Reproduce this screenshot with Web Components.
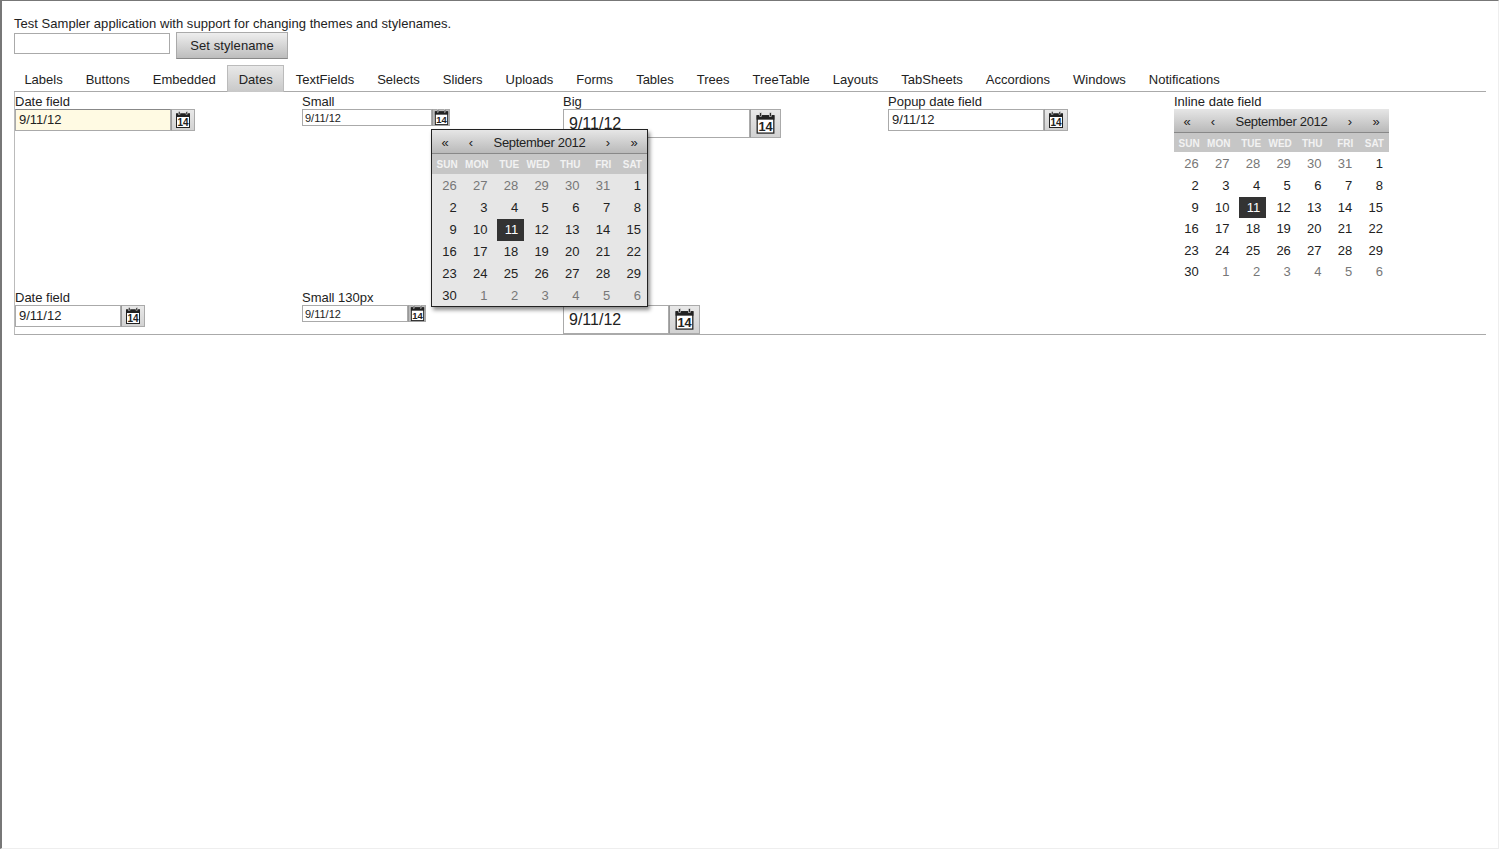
<!DOCTYPE html>
<html lang="en">
<head>
<meta charset="utf-8">
<title>Test Sampler</title>
<style>
html, body { margin: 0; height: 100%; background: #fff; }
body { font: 13px/16px "Liberation Sans", Arial, sans-serif; color: #222; overflow: hidden; }
</style>
</head>
<body>
<sampler-app>
	<tab-bar></tab-bar>
	<dates-panel>
		<labeled-field label="Date field"><date-field focused style="--input-w:156px"></date-field></labeled-field>
		<labeled-field label="Small"><date-field kind="small" style="--input-w:130px"></date-field></labeled-field>
		<labeled-field label="Big"><date-field kind="big" style="--input-w:187px"></date-field></labeled-field>
		<labeled-field label="Popup date field"><date-field style="--input-w:156px"></date-field></labeled-field>
		<labeled-field label="Inline date field"><month-calendar kind="inline"></month-calendar></labeled-field>
		<labeled-field label="Date field"><date-field style="--input-w:106px"></date-field></labeled-field>
		<labeled-field label="Small 130px"><date-field kind="small" style="--input-w:106px"></date-field></labeled-field>
		<labeled-field label="&nbsp;"><date-field kind="big" style="--input-w:106px"></date-field></labeled-field>
		<month-calendar slot="popup" kind="popup"></month-calendar>
	</dates-panel>
</sampler-app>

<script>
const appTemplate = document.createElement("template");
appTemplate.innerHTML = `
<style>
:host {
	display: block;
	box-sizing: border-box;
	height: 849px;
	width: 1499px;
	padding: 15px 12px 0 12px;
	border-top: 1px solid #777;
	border-left: 2px solid #777;
	border-right: 1px solid #eee;
	border-bottom: 1px solid #eee;
}
p {
	margin: 0;
	height: 16px;
	line-height: 16px;
	letter-spacing: 0.03px;
}
form {
	display: flex;
	align-items: flex-start;
	gap: 6px;
	margin-bottom: 6px;
}
input {
	box-sizing: border-box;
	width: 156px;
	height: 21px;
	margin-top: 1px;
	border: 1px solid #aaa;
	outline: none;
}
button {
	box-sizing: border-box;
	width: 112px;
	height: 27px;
	padding: 0;
	border: 1px solid #aaa;
	border-bottom-color: #888;
	background: linear-gradient(#eee, #bdbdbd);
	font: inherit;
	color: #222;
	letter-spacing: 0.1px;
}
</style>
<p>Test Sampler application with support for changing themes and stylenames.</p>
<form onsubmit="return false">
	<input aria-label="Stylename">
	<button type="button">Set stylename</button>
</form>
<slot></slot>
`;

class SamplerApp extends HTMLElement {
	constructor() {
		super().attachShadow({ mode: "open" }).appendChild(appTemplate.content.cloneNode(true));
	}
}
customElements.define("sampler-app", SamplerApp);

const TABS = ["Labels", "Buttons", "Embedded", "Dates", "TextFields", "Selects", "Sliders", "Uploads",
	"Forms", "Tables", "Trees", "TreeTable", "Layouts", "TabSheets", "Accordions", "Windows", "Notifications"];

class TabBar extends HTMLElement {
	constructor() {
		super().attachShadow({ mode: "open" }).innerHTML = `
<style>
:host {
	display: flex;
	height: 27px;
	box-sizing: border-box;
	border-bottom: 1px solid #aaa;
}
div {
	box-sizing: border-box;
	height: 27px;
	padding: 6px 10.5px 0;
	line-height: 16px;
	border: 1px solid transparent;
	border-bottom: 0;
	white-space: nowrap;
}
div:first-of-type { padding-left: 9.4px; }
div.on {
	border-color: #bbb;
	background: linear-gradient(#e8e8e8, #c8c8c8);
}
</style>
${TABS.map((t) => `<div class="${t == "Dates" ? "on" : ""}">${t}</div>`).join("")}`;
	}
}
customElements.define("tab-bar", TabBar);

class DatesPanel extends HTMLElement {
	constructor() {
		super().attachShadow({ mode: "open" }).innerHTML = `
<style>
:host {
	display: grid;
	position: relative;
	box-sizing: border-box;
	height: 243px;
	grid-template-columns: 287px 261px 325px 286px 1fr;
	grid-template-rows: 196px 1fr;
	padding: 2px 0 0 0;
	border-left: 1px solid #bbb;
	border-bottom: 1px solid #aaa;
}
::slotted([slot="popup"]) {
	position: absolute;
	left: 416px;
	top: 37px;
}
</style>
<slot></slot>
<slot name="popup"></slot>`;
	}
}
customElements.define("dates-panel", DatesPanel);

class LabeledField extends HTMLElement {
	constructor() {
		super().attachShadow({ mode: "open" }).innerHTML = `
<style>
:host { display: block; }
label { display: block; height: 15px; line-height: 16px; white-space: nowrap; }
</style>
<label></label>
<slot></slot>`;
		this.shadowRoot.querySelector("label").innerHTML = this.getAttribute("label");
	}
}
customElements.define("labeled-field", LabeledField);

const FIELD_SIZES = {
	normal: { h: 22, font: 13, btn: 24, icon: 18, pad: 3, top: 0 },
	small: { h: 17, font: 11, btn: 18, icon: 17, pad: 2, top: 1 },
	big: { h: 29, font: 16, btn: 31, icon: 23, pad: 5, top: 0 },
};

class DateField extends HTMLElement {
	constructor() {
		super();
		const size = FIELD_SIZES[this.getAttribute("kind") || "normal"];
		const focused = this.hasAttribute("focused");
		this.attachShadow({ mode: "open" }).innerHTML = `
<style>
:host {
	display: flex;
	height: ${size.h}px;
	font-size: ${size.font}px;
}
.value {
	box-sizing: border-box;
	width: var(--input-w);
	padding: ${size.top}px 0 0 ${size.pad}px;
	line-height: ${size.h - 2}px;
	border: 1px solid #aaa;
	border-top-color: ${focused ? "#888" : "#aaa"};
	background: ${focused ? "#fffae3" : "#fff"};
	color: #222;
}
.btn {
	box-sizing: border-box;
	display: flex;
	align-items: center;
	justify-content: center;
	width: ${size.btn}px;
	border: 1px solid #aaa;
	border-left-color: #999;
	background: ${this.getAttribute("kind") == "small" ? "#bbb" : "linear-gradient(#e8e8e8, #d2d2d2)"};
}
svg { display: block; flex: none; width: ${size.icon}px; height: ${size.icon}px; }
</style>
<div class="value">9/11/12</div>
<div class="btn">
	<svg viewBox="0 0 18 18" aria-hidden="true">
		<rect x="2.5" y="3" width="13" height="13.5" fill="#fff" stroke="#222"/>
		<rect x="2" y="2.5" width="14" height="3.5" fill="#222"/>
		<rect x="4.5" y="0.5" width="1.5" height="3" fill="#222" stroke="#ddd" stroke-width="0.5"/>
		<rect x="12" y="0.5" width="1.5" height="3" fill="#222" stroke="#ddd" stroke-width="0.5"/>
		<text x="9" y="15" text-anchor="middle" font-family="Liberation Sans" font-weight="700" font-size="10" fill="#222">14</text>
	</svg>
</div>`;
	}
}
customElements.define("date-field", DateField);

const SEPTEMBER_CELLS = [26, 27, 28, 29, 30, 31, 1, 2, 3, 4, 5, 6, 7, 8, 9, 10, 11, 12, 13, 14, 15,
	16, 17, 18, 19, 20, 21, 22, 23, 24, 25, 26, 27, 28, 29, 30, 1, 2, 3, 4, 5, 6];

class MonthCalendar extends HTMLElement {
	constructor() {
		super();
		const popup = this.getAttribute("kind") == "popup";
		const days = SEPTEMBER_CELLS.map((d, i) => {
			const other = i < 6 || i > 35;
			const today = i == 16;
			return `<span class="${other ? "other" : ""} ${today ? "today" : ""}">${d}</span>`;
		}).join("");
		this.attachShadow({ mode: "open" }).innerHTML = `
<style>
:host {
	display: block;
	box-sizing: border-box;
	width: ${popup ? "217px" : "215px"};
	${popup ? `
	height: 178px;
	border: 1px solid #222;
	background: #e6e6e6;
	box-shadow: 2px 3px 4px rgba(0, 0, 0, 0.45);
	` : ""}
}
header {
	display: grid;
	grid-template-columns: 26px 26px 1fr 26px 26px;
	height: 24px;
	line-height: 26px;
	text-align: center;
	border-bottom: 1px solid #888;
	background: linear-gradient(#e6e6e6, #b9b9b9);
	box-sizing: border-box;
}
header .title { letter-spacing: -0.3px; }
.week, .days {
	display: grid;
	grid-template-columns: repeat(7, 1fr);
	text-align: right;
}
.week {
	height: ${popup ? "20px" : "19px"};
	line-height: ${popup ? "22px" : "21px"};
	background: #c6c6c6;
	color: #f2f2f2;
	font-size: 10px;
	font-weight: 700;
}
.week span { padding-right: 5px; }
.days {
	margin-top: ${popup ? "1px" : "1.4px"};
	grid-auto-rows: ${popup ? "22px" : "21.6px"};
	line-height: ${popup ? "22px" : "21.6px"};
}
.days span {
	margin-left: 4px;
	padding-right: 6px;
	color: #222;
}
.days .other { color: #777; }
.days .today {
	background: #333;
	color: #fff;
}
</style>
<header><span>«</span><span>‹</span><span class="title">September 2012</span><span>›</span><span>»</span></header>
<div class="week"><span>SUN</span><span>MON</span><span>TUE</span><span>WED</span><span>THU</span><span>FRI</span><span>SAT</span></div>
<div class="days">${days}</div>`;
	}
}
customElements.define("month-calendar", MonthCalendar);
</script>
</body>
</html>
